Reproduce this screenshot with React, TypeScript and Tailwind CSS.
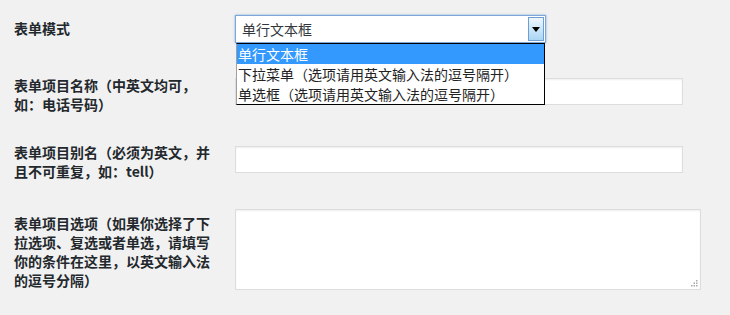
import React from "react";

const font = {
  fontFamily: '"Noto Sans CJK SC", "Noto Sans", sans-serif',
};

const options = [
  "单行文本框",
  "下拉菜单（选项请用英文输入法的逗号隔开）",
  "单选框（选项请用英文输入法的逗号隔开）",
];

function Label({ children, mt }: { children: React.ReactNode; mt: string }) {
  return (
    <div
      className={`w-[200px] shrink-0 text-[14px] leading-[19px] font-bold text-[#23282d] ${mt}`}
    >
      {children}
    </div>
  );
}

export default function App() {
  return (
    <div
      className="w-[730px] h-[315px] bg-[#f1f1f1] overflow-hidden pl-[14px] [text-spacing-trim:space-all]"
      style={font}
    >
      {/* 表单模式 */}
      <div className="flex h-[60px] gap-[21px]">
        <Label mt="mt-[19px]">表单模式</Label>
        <div className="relative mt-[15px]">
          <div className="flex h-[28px] w-[311px] items-center bg-white border border-[#7ea6d6] shadow-[0_0_2px_rgba(91,157,217,0.8)]">
            <span className="flex-1 pl-[6px] text-[14px] text-[#32373c]">
              单行文本框
            </span>
            <div className="mr-px flex h-[24px] w-[16px] items-center justify-center border border-[#6d9fd3] bg-gradient-to-b from-[#eef6fd] to-[#aad6f4]">
              <svg width="8" height="5" viewBox="0 0 8 5">
                <path d="M0 0 H8 L4 5 Z" fill="#000" />
              </svg>
            </div>
          </div>
          {/* open list */}
          <ul className="absolute left-px top-[28px] z-10 w-[309px] bg-white border border-black border-l-[#a0a0a0] text-[14px] leading-[20px] text-[#222]">
            {options.map((o, i) => (
              <li
                key={o}
                className={`pl-[1px] h-[20px] whitespace-nowrap ${
                  i === 0 ? "bg-[#3399ff] text-white" : ""
                }`}
              >
                {o}
              </li>
            ))}
          </ul>
        </div>
      </div>

      {/* 表单项目名称 */}
      <div className="flex h-[68px] gap-[21px]">
        <Label mt="mt-[15.5px]">表单项目名称（中英文均可，如：电话号码）</Label>
        <input
          className="mt-[18px] h-[27px] w-[448px] bg-white border border-[#dddddd] shadow-[inset_0_1px_2px_rgba(0,0,0,0.07)] outline-none"
          type="text"
        />
      </div>

      {/* 表单项目别名 */}
      <div className="flex h-[72px] gap-[21px]">
        <Label mt="mt-[14.5px]">表单项目别名（必须为英文，并且不可重复，如：tell）</Label>
        <input
          className="mt-[18px] h-[27px] w-[448px] bg-white border border-[#dddddd] shadow-[inset_0_1px_2px_rgba(0,0,0,0.07)] outline-none"
          type="text"
        />
      </div>

      {/* 表单项目选项 */}
      <div className="flex gap-[21px]">
        <Label mt="mt-[13.5px]">
          表单项目选项（如果你选择了下拉选项、复选或者单选，请填写你的条件在这里，以英文输入法的逗号分隔）
        </Label>
        <div className="relative mt-[9px] h-[81px] w-[466px]">
          <textarea className="block h-full w-full resize-none bg-white border border-[#dddddd] shadow-[inset_0_1px_2px_rgba(0,0,0,0.07)] outline-none" />
          <svg
            className="absolute right-[3px] bottom-[3px]"
            width="7"
            height="7"
            viewBox="0 0 7 7"
          >
            <rect x="5" y="0" width="1.5" height="1.5" fill="#a8a8a8" />
            <rect x="2.5" y="2.5" width="1.5" height="1.5" fill="#a8a8a8" />
            <rect x="5" y="2.5" width="1.5" height="1.5" fill="#a8a8a8" />
            <rect x="0" y="5" width="1.5" height="1.5" fill="#a8a8a8" />
            <rect x="2.5" y="5" width="1.5" height="1.5" fill="#a8a8a8" />
            <rect x="5" y="5" width="1.5" height="1.5" fill="#a8a8a8" />
          </svg>
        </div>
      </div>
    </div>
  );
}
